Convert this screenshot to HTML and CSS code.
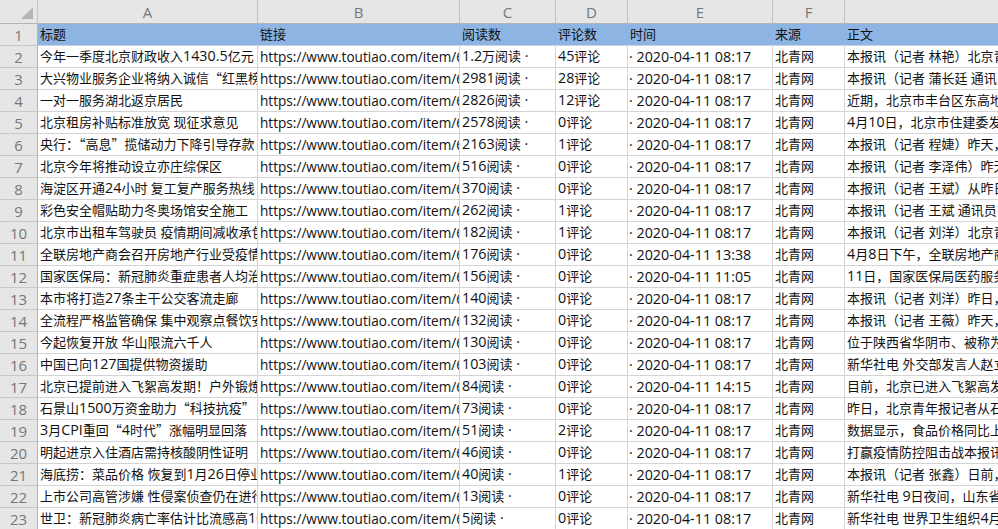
FILE: index.html
```html
<!DOCTYPE html>
<html lang="zh">
<head>
<meta charset="utf-8">
<title>Sheet</title>
<link rel="stylesheet" href="styles.css">
</head>
<body>
<table class="sheet">
<colgroup><col class="c-num"><col class="c-a"><col class="c-b"><col class="c-c"><col class="c-d"><col class="c-e"><col class="c-f"><col class="c-g"></colgroup>
<thead><tr><th class="corner"><span class="tri"></span></th><th>A</th><th>B</th><th>C</th><th>D</th><th>E</th><th>F</th><th>G</th></tr></thead>
<tbody>
<tr class="head"><th>1</th><td>标题</td><td>链接</td><td>阅读数</td><td>评论数</td><td>时间</td><td>来源</td><td>正文</td></tr>
<tr><th>2</th><td>今年一季度北京财政收入<span class="n">1430.5</span>亿元</td><td>https://www.toutiao.com/item/6</td><td><span class="n">1.2</span>万阅读<span class="n"> ·</span></td><td><span class="n">45</span>评论</td><td>· 2020-04-11 08:17</td><td>北青网</td><td>本报讯（记者 林艳）北京青年报</td></tr>
<tr><th>3</th><td>大兴物业服务企业将纳入诚信<span class="q">“</span>红黑榜<span class="q">”</span></td><td>https://www.toutiao.com/item/6</td><td><span class="n">2981</span>阅读<span class="n"> ·</span></td><td><span class="n">28</span>评论</td><td>· 2020-04-11 08:17</td><td>北青网</td><td>本报讯（记者 蒲长廷 通讯员</td></tr>
<tr><th>4</th><td>一对一服务湖北返京居民</td><td>https://www.toutiao.com/item/6</td><td><span class="n">2826</span>阅读<span class="n"> ·</span></td><td><span class="n">12</span>评论</td><td>· 2020-04-11 08:17</td><td>北青网</td><td>近期，北京市丰台区东高地街道</td></tr>
<tr><th>5</th><td>北京租房补贴标准放宽 现征求意见</td><td>https://www.toutiao.com/item/6</td><td><span class="n">2578</span>阅读<span class="n"> ·</span></td><td><span class="n">0</span>评论</td><td>· 2020-04-11 08:17</td><td>北青网</td><td><span class="n">4</span>月<span class="n">10</span>日，北京市住建委发布</td></tr>
<tr><th>6</th><td>央行：<span class="q">“</span>高息<span class="q">”</span>揽储动力下降引导存款</td><td>https://www.toutiao.com/item/6</td><td><span class="n">2163</span>阅读<span class="n"> ·</span></td><td><span class="n">1</span>评论</td><td>· 2020-04-11 08:17</td><td>北青网</td><td>本报讯（记者 程婕）昨天，央行</td></tr>
<tr><th>7</th><td>北京今年将推动设立亦庄综保区</td><td>https://www.toutiao.com/item/6</td><td><span class="n">516</span>阅读<span class="n"> ·</span></td><td><span class="n">0</span>评论</td><td>· 2020-04-11 08:17</td><td>北青网</td><td>本报讯（记者 李泽伟）昨天，</td></tr>
<tr><th>8</th><td>海淀区开通<span class="n">24</span>小时 复工复产服务热线</td><td>https://www.toutiao.com/item/6</td><td><span class="n">370</span>阅读<span class="n"> ·</span></td><td><span class="n">0</span>评论</td><td>· 2020-04-11 08:17</td><td>北青网</td><td>本报讯（记者 王斌）从昨日</td></tr>
<tr><th>9</th><td>彩色安全帽贴助力冬奥场馆安全施工</td><td>https://www.toutiao.com/item/6</td><td><span class="n">262</span>阅读<span class="n"> ·</span></td><td><span class="n">1</span>评论</td><td>· 2020-04-11 08:17</td><td>北青网</td><td>本报讯（记者 王斌 通讯员</td></tr>
<tr><th>10</th><td>北京市出租车驾驶员 疫情期间减收承包费</td><td>https://www.toutiao.com/item/6</td><td><span class="n">182</span>阅读<span class="n"> ·</span></td><td><span class="n">1</span>评论</td><td>· 2020-04-11 08:17</td><td>北青网</td><td>本报讯（记者 刘洋）北京青年报</td></tr>
<tr><th>11</th><td>全联房地产商会召开房地产行业受疫情</td><td>https://www.toutiao.com/item/6</td><td><span class="n">176</span>阅读<span class="n"> ·</span></td><td><span class="n">0</span>评论</td><td>· 2020-04-11 13:38</td><td>北青网</td><td><span class="n">4</span>月<span class="n">8</span>日下午，全联房地产商会</td></tr>
<tr><th>12</th><td>国家医保局：新冠肺炎重症患者人均治疗</td><td>https://www.toutiao.com/item/6</td><td><span class="n">156</span>阅读<span class="n"> ·</span></td><td><span class="n">0</span>评论</td><td>· 2020-04-11 11:05</td><td>北青网</td><td><span class="n">11</span>日，国家医保局医药服务</td></tr>
<tr><th>13</th><td>本市将打造<span class="n">27</span>条主干公交客流走廊</td><td>https://www.toutiao.com/item/6</td><td><span class="n">140</span>阅读<span class="n"> ·</span></td><td><span class="n">0</span>评论</td><td>· 2020-04-11 08:17</td><td>北青网</td><td>本报讯（记者 刘洋）昨日，北京</td></tr>
<tr><th>14</th><td>全流程严格监管确保 集中观察点餐饮安全</td><td>https://www.toutiao.com/item/6</td><td><span class="n">132</span>阅读<span class="n"> ·</span></td><td><span class="n">0</span>评论</td><td>· 2020-04-11 08:17</td><td>北青网</td><td>本报讯（记者 王薇）昨天，北京</td></tr>
<tr><th>15</th><td>今起恢复开放 华山限流六千人</td><td>https://www.toutiao.com/item/6</td><td><span class="n">130</span>阅读<span class="n"> ·</span></td><td><span class="n">0</span>评论</td><td>· 2020-04-11 08:17</td><td>北青网</td><td>位于陕西省华阴市、被称为</td></tr>
<tr><th>16</th><td>中国已向<span class="n">127</span>国提供物资援助</td><td>https://www.toutiao.com/item/6</td><td><span class="n">103</span>阅读<span class="n"> ·</span></td><td><span class="n">0</span>评论</td><td>· 2020-04-11 08:17</td><td>北青网</td><td>新华社电 外交部发言人赵立坚</td></tr>
<tr><th>17</th><td>北京已提前进入飞絮高发期！户外锻炼</td><td>https://www.toutiao.com/item/6</td><td><span class="n">84</span>阅读<span class="n"> ·</span></td><td><span class="n">0</span>评论</td><td>· 2020-04-11 14:15</td><td>北青网</td><td>目前，北京已进入飞絮高发期</td></tr>
<tr><th>18</th><td>石景山<span class="n">1500</span>万资金助力<span class="q">“</span>科技抗疫<span class="q">”</span></td><td>https://www.toutiao.com/item/6</td><td><span class="n">73</span>阅读<span class="n"> ·</span></td><td><span class="n">0</span>评论</td><td>· 2020-04-11 08:17</td><td>北青网</td><td>昨日，北京青年报记者从石景山</td></tr>
<tr><th>19</th><td><span class="n">3</span>月<span class="n">CPI</span>重回<span class="q">“</span><span class="n">4</span>时代<span class="q">”</span>涨幅明显回落</td><td>https://www.toutiao.com/item/6</td><td><span class="n">51</span>阅读<span class="n"> ·</span></td><td><span class="n">2</span>评论</td><td>· 2020-04-11 08:17</td><td>北青网</td><td>数据显示，食品价格同比上涨</td></tr>
<tr><th>20</th><td>明起进京入住酒店需持核酸阴性证明</td><td>https://www.toutiao.com/item/6</td><td><span class="n">46</span>阅读<span class="n"> ·</span></td><td><span class="n">0</span>评论</td><td>· 2020-04-11 08:17</td><td>北青网</td><td>打赢疫情防控阻击战本报讯</td></tr>
<tr><th>21</th><td>海底捞：菜品价格 恢复到<span class="n">1</span>月<span class="n">26</span>日停业前</td><td>https://www.toutiao.com/item/6</td><td><span class="n">40</span>阅读<span class="n"> ·</span></td><td><span class="n">1</span>评论</td><td>· 2020-04-11 08:17</td><td>北青网</td><td>本报讯（记者 张鑫）日前，北京</td></tr>
<tr><th>22</th><td>上市公司高管涉嫌 性侵案侦查仍在进行</td><td>https://www.toutiao.com/item/6</td><td><span class="n">13</span>阅读<span class="n"> ·</span></td><td><span class="n">0</span>评论</td><td>· 2020-04-11 08:17</td><td>北青网</td><td>新华社电 <span class="n">9</span>日夜间，山东省</td></tr>
<tr><th>23</th><td>世卫：新冠肺炎病亡率估计比流感高<span class="n">10</span>倍</td><td>https://www.toutiao.com/item/6</td><td><span class="n">5</span>阅读<span class="n"> ·</span></td><td><span class="n">0</span>评论</td><td>· 2020-04-11 08:17</td><td>北青网</td><td>新华社电 世界卫生组织<span class="n">4</span>月</td></tr>
</tbody>
</table>
</body>
</html>
```
FILE: styles.css
```css
html, body {
  margin: 0;
  height: 100%;
  overflow: hidden;
  background: #fff;
}
.sheet {
  border-collapse: separate;
  border-spacing: 0;
  table-layout: fixed;
  width: 1200px;
  font-family: "Open Sans", "Noto Sans CJK SC", sans-serif;
  font-size: 13px;
  color: #111;
}
.c-num { width: 38px; }
.c-a { width: 220px; }
.c-b { width: 202px; }
.c-c { width: 96px; }
.c-d { width: 72px; }
.c-e { width: 145px; }
.c-f { width: 72px; }
.c-g { width: 355px; }
.sheet th, .sheet td {
  box-sizing: border-box;
  height: 22px;
  padding: 0;
  overflow: hidden;
  white-space: nowrap;
  font-weight: 400;
}
.sheet td {
  padding-left: 2px;
  border-right: 1px solid #d4d4d4;
  border-bottom: 1px solid #d4d4d4;
  line-height: 21px;
}
.n {
  font-size: 14.3px;
  line-height: 1;
}
.q {
  font-family: "Noto Sans CJK SC", sans-serif;
  line-height: 1;
}
.sheet tr:not(.head) td:nth-child(3) {
  font-size: 13.6px;
}
.sheet tr:not(.head) td:nth-child(6) {
  padding-left: 1px;
  font-size: 14.3px;
}
.sheet thead th {
  height: 24px;
  background: #e6e6e6;
  border-right: 1px solid #c2c2c2;
  border-bottom: 1px solid #b4b4b4;
  color: #777;
  font-size: 15px;
  text-align: center;
}
.sheet tbody th {
  background: #e6e6e6;
  border-right: 1px solid #b4b4b4;
  border-bottom: 1px solid #c8c8c8;
  color: #777;
  font-size: 15px;
  text-align: center;
}
.sheet thead .corner {
  position: relative;
}
.tri {
  position: absolute;
  left: 21px;
  top: 7px;
  width: 12px;
  height: 12px;
  background: #b5b5b5;
  clip-path: polygon(100% 0, 100% 100%, 0 100%);
}
.sheet .head td {
  background: #8db4e2;
  border-right: 0;
  border-bottom: 1px solid #c9d3df;
}
```
